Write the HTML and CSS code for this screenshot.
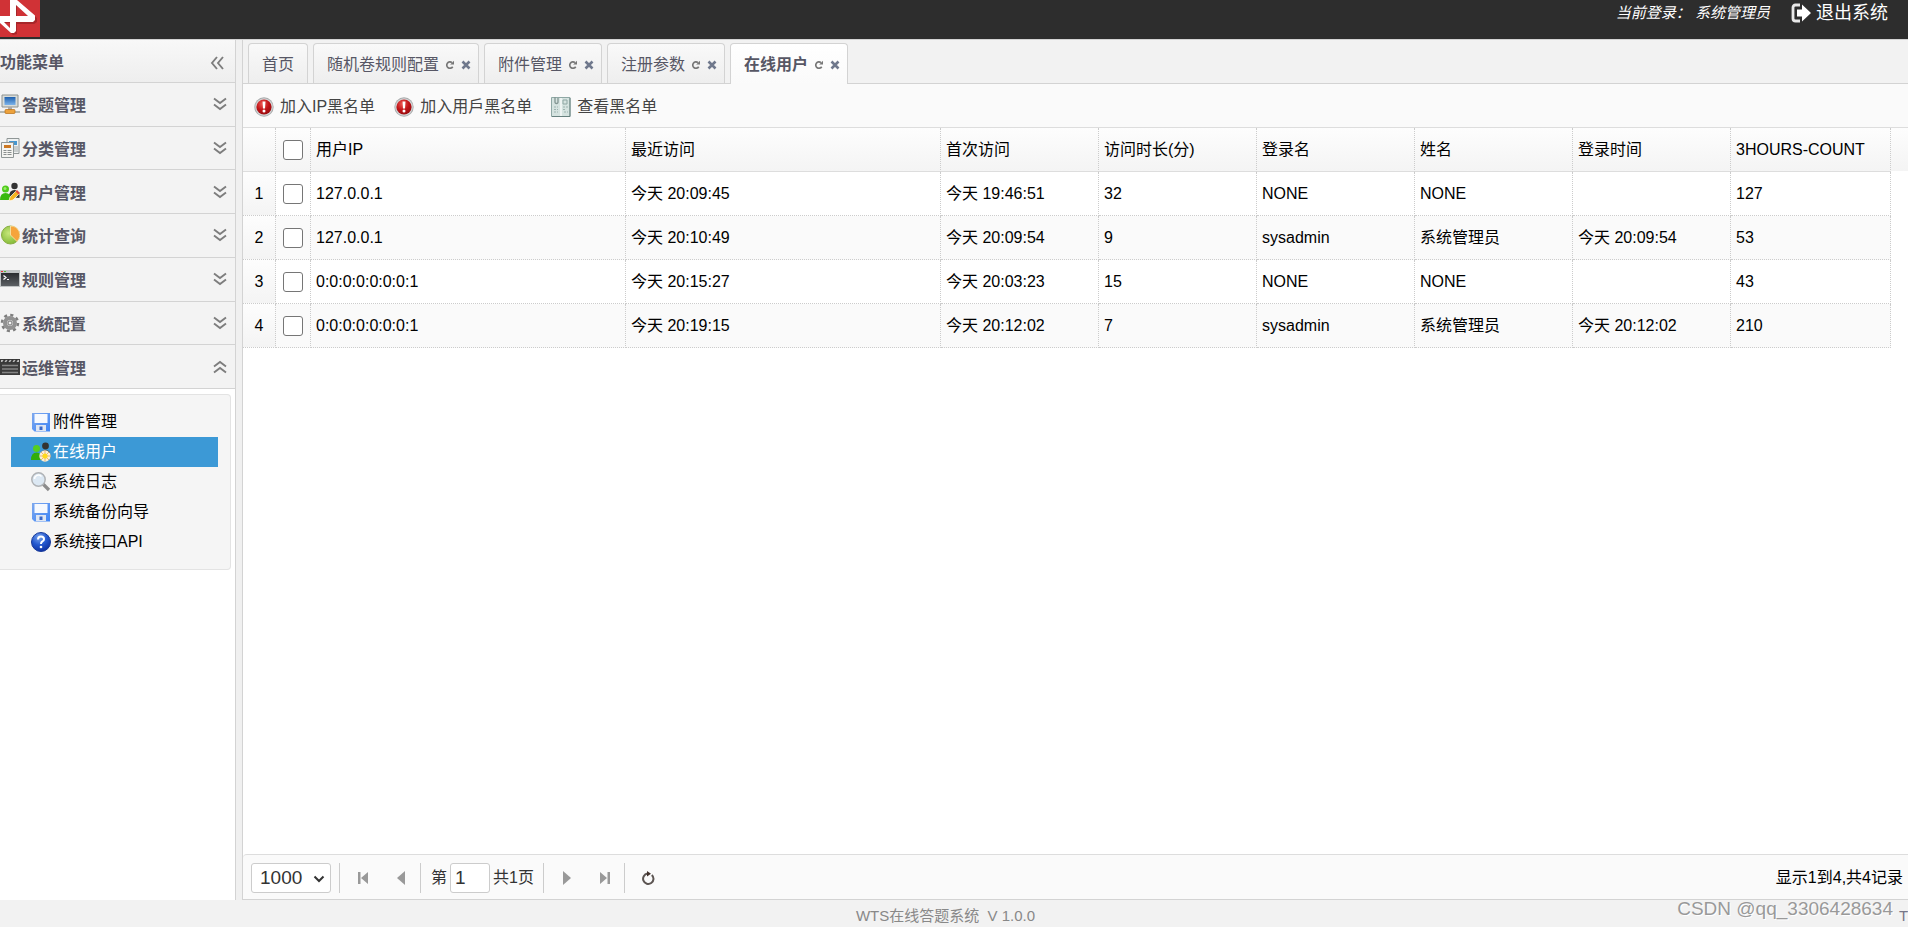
FILE: index.html
```html
<!DOCTYPE html>
<html lang="zh-CN">
<head>
<meta charset="utf-8">
<title>WTS在线答题系统</title>
<link rel="stylesheet" href="styles.css">
</head>
<body>
<svg class="sprite" aria-hidden="true">
  <defs>
    <linearGradient id="gBlue" x1="0" y1="0" x2="0" y2="1"><stop offset="0" stop-color="#1d5fae"/><stop offset="1" stop-color="#7db4ea"/></linearGradient>
    <linearGradient id="gDisk" x1="0" y1="0" x2="1" y2="1"><stop offset="0" stop-color="#7fa9ee"/><stop offset="1" stop-color="#3f86f6"/></linearGradient>
    <radialGradient id="gRed" cx=".4" cy=".3" r=".8"><stop offset="0" stop-color="#ee5a55"/><stop offset=".5" stop-color="#c11418"/><stop offset="1" stop-color="#8d0a0c"/></radialGradient>
    <radialGradient id="gHelp" cx=".4" cy=".25" r=".8"><stop offset="0" stop-color="#7aa5ee"/><stop offset=".5" stop-color="#2459cf"/><stop offset="1" stop-color="#0c2d9c"/></radialGradient>
    <radialGradient id="gPie" cx=".4" cy=".4" r=".7"><stop offset="0" stop-color="#c6e67c"/><stop offset="1" stop-color="#7cb52e"/></radialGradient>
    <linearGradient id="gDark" x1="0" y1="0" x2="0" y2="1"><stop offset="0" stop-color="#2a2d30"/><stop offset="1" stop-color="#5c6064"/></linearGradient>
  </defs>
  <symbol id="down" viewBox="0 0 14 14"><path d="M1 1.500 7 6l6-4.500M1 7.500 7 12l6-4.500" fill="none" stroke="#7d7d7d" stroke-width="1.900"/></symbol>
  <symbol id="disk" viewBox="0 0 20 20"><path d="M1 1h18v18.500H3.500L1 17z" fill="url(#gDisk)"/><path d="M3.500 2h13v9h-13z" fill="#f6f9fe"/><path d="M5 13h10v6H5z" fill="#dfe6f2"/><path d="M8.500 14.500h3v3.500h-3z" fill="#3868c8"/></symbol>
  <symbol id="alert" viewBox="0 0 20 20"><circle cx="10" cy="10" r="9.700" fill="#a9abad"/><circle cx="10" cy="10" r="8.800" fill="#d3d5d6"/><circle cx="10" cy="10" r="7.600" fill="url(#gRed)"/><path d="M8.500 4.500h3l-.5 7H9z" fill="#fff"/><circle cx="10" cy="14" r="1.500" fill="#fff"/></symbol>
  <symbol id="reload" viewBox="0 0 10 10"><path d="M7.700 6.700A3.200 3.200 0 1 1 7 2.600" fill="none" stroke="#777" stroke-width="1.700"/><path d="M5.200 4.500H9V.8z" fill="#777"/></symbol>
  <symbol id="close" viewBox="0 0 10 10"><path d="M1.500 1.500l7 7M8.500 1.500l-7 7" stroke="#6f788c" stroke-width="2.600"/></symbol>
</svg>

<header class="topbar">
  <svg class="logo" viewBox="0 0 40 37" role="img" aria-label="WTS"><path d="M0 0h40v37H0z" fill="#d03236"/><path d="M0 17h10V0h6l20 17v4l-3 2H16v10l-4 1L0 22zM16 5v11h12zM4 22l7 6v-6z" fill="#7e1a1d" fill-rule="evenodd" opacity=".5" transform="translate(1 1)"/><path d="M0 16h10V0h7l18 15.500V20l-2 2H16v9l-2 2h-3L0 23zM16 5v11h12zM4 22l6 6v-6z" fill="#fff" fill-rule="evenodd"/></svg>
  <div class="account">
    <span class="who">当前登录： 系统管理员</span>
    <a class="logout" href="#"><svg class="icon" viewBox="0 0 20 20"><path d="M9 2H4.500Q2 2 2 4.500v11Q2 18 4.500 18H9" fill="none" stroke="#e8e8e8" stroke-width="2.800"/><path d="M6 6.500h5V1.500l9 8.500-9 8.500v-5H6z" fill="#fff"/></svg>退出系统</a>
  </div>
</header>

<div class="workspace">
  <aside class="sidebar">
    <div class="side-title"><span>功能菜单</span><button class="plain" aria-label="收起"><svg class="chev" viewBox="0 0 14 14"><path d="M7 1 2 7l5 6M13 1 8 7l5 6" fill="none" stroke="#7d7d7d" stroke-width="1.900"/></svg></button></div>
    <nav class="accordion">
      <button class="fold"><svg class="icon" viewBox="0 0 20 20"><path d="M2 1h16v12H2z" fill="#d9dcd8" stroke="#8d9290"/><path d="M4.500 3h11v8h-11z" fill="url(#gBlue)"/><path d="M8 13h4v3H8z" fill="#aaa"/><path d="M0 17h20v2H0z" fill="#b5b9b5"/><rect x="5" y="15.500" width="10" height="4" rx="1" fill="#eda23c" stroke="#b66f16" stroke-width=".7"/></svg><span>答题管理</span><svg class="chev"><use href="#down"/></svg></button>
      <button class="fold"><svg class="icon" viewBox="0 0 20 20"><path d="M7 .5h12v15H7z" fill="#eef1f1" stroke="#8f9696"/><path d="M9 3h8v4H9z" fill="#4797cf"/><path d="M14 9h4M14 11h4M14 13h4" stroke="#a4abab"/><path d="M1.500 4.500h12v15h-12z" fill="#f4f4f1" stroke="#8f9696"/><path d="M4 7h7v3H4z" fill="#cc7823"/><path d="M3.500 12.500h3m1 0h4m-8 2h3m1 0h4m-8 2h3m1 0h4" stroke="#8a8f8f"/></svg><span>分类管理</span><svg class="chev"><use href="#down"/></svg></button>
      <button class="fold"><svg class="icon" viewBox="0 0 20 20"><circle cx="14.500" cy="4" r="3.200" fill="#333"/><path d="M9 15q0-7 5.500-7t5 8z" fill="#333"/><circle cx="5.500" cy="7" r="3.500" fill="#4ecb19"/><path d="M0 18q0-7 5.500-7t5.500 7z" fill="#39b90c"/><circle cx="5" cy="6.500" r="1.500" fill="#9aea6b"/><path d="M9 19l1-4 7-7 3 3-7 7z" fill="#f7b521" stroke="#fff" stroke-width=".7"/><path d="M15.500 9.500l3 3L20 11l-3-3z" fill="#e34a3c"/></svg><span>用户管理</span><svg class="chev"><use href="#down"/></svg></button>
      <button class="fold"><svg class="icon" viewBox="0 0 20 20"><circle cx="10.500" cy="10" r="9" fill="url(#gPie)" stroke="#87ad43"/><path d="M10.500 10V1a9 9 0 0 1 6.500 15.500z" fill="#f6a43b" stroke="#fbe7b2" stroke-width=".8"/></svg><span>统计查询</span><svg class="chev"><use href="#down"/></svg></button>
      <button class="fold"><svg class="icon" viewBox="0 0 20 20"><path d="M0 1h20v17H0z" fill="#bfc3c4"/><path d="M1 4h18v13H1z" fill="url(#gDark)"/><path d="M1 2h2v1H1z" fill="#e33"/><path d="M4 2h2v1H4z" fill="#5b3"/><path d="M3.500 6.500 6 8.500 3.500 10.500M7 10.500h2" fill="none" stroke="#fff" stroke-width="1.200"/></svg><span>规则管理</span><svg class="chev"><use href="#down"/></svg></button>
      <button class="fold"><svg class="icon" viewBox="0 0 20 20"><circle cx="10" cy="10" r="8" fill="none" stroke="#7f7f7f" stroke-width="2.500" stroke-dasharray="3.100 3.183"/><circle cx="10" cy="10" r="5" fill="#d5d5d5" stroke="#929292" stroke-width="4"/><circle cx="10" cy="10" r="2" fill="#f5f5f5" stroke="#777"/></svg><span>系统配置</span><svg class="chev"><use href="#down"/></svg></button>
      <button class="fold" aria-expanded="true"><svg class="icon" viewBox="0 0 20 20"><path d="M0 2h20v16H0z" fill="#3b3b3b"/><path d="M1 3h18v2H1z" fill="#bbb"/><path d="M3 5.500l2-3M7 5.500l2-3M11 5.500l2-3M15 5.500l2-3" stroke="#333" stroke-width="1.800"/><path d="M2 8.500h16M2 12h16M2 15.500h16" stroke="#858585" stroke-width="1.600"/></svg><span>运维管理</span><svg class="chev flip"><use href="#down"/></svg></button>
    </nav>
    <div class="submenu">
      <a class="entry" href="#"><svg class="icon"><use href="#disk"/></svg>附件管理</a>
      <a class="entry current" href="#"><svg class="icon" viewBox="0 0 20 20"><circle cx="14.500" cy="4" r="3.400" fill="#333"/><path d="M9 15q0-7 5.500-7t5 8z" fill="#333"/><circle cx="5.500" cy="6.500" r="3.500" fill="#55cf20"/><path d="M0 18q0-7.500 5.500-7.500T11 18z" fill="#31ad08"/><circle cx="14" cy="14" r="5.700" fill="#f9efd8"/><path d="M14 8.500v11M8.500 14h11M10 10l8 8M18 10l-8 8" stroke="#e2a45d" stroke-width=".8"/><circle cx="14" cy="14" r="2.600" fill="#ffd91c"/></svg>在线用户</a>
      <a class="entry" href="#"><svg class="icon" viewBox="0 0 20 20"><path d="M12 12l6 6" stroke="#8c8c8c" stroke-width="3.200"/><circle cx="7.500" cy="7.500" r="6.700" fill="#dce8f3" stroke="#b0b3b6" stroke-width="1.500"/><path d="M3.500 7a4 4 0 0 1 7-2.500" fill="none" stroke="#fff" stroke-width="1.500"/></svg>系统日志</a>
      <a class="entry" href="#"><svg class="icon"><use href="#disk"/></svg>系统备份向导</a>
      <a class="entry" href="#"><svg class="icon" viewBox="0 0 20 20"><circle cx="10" cy="10" r="9.500" fill="url(#gHelp)" stroke="#183b9b"/><path d="M7 7.500Q7 4.500 10 4.500t3 2.700q0 1.300-1.700 2.300Q10 10.200 10 12" fill="none" stroke="#fff" stroke-width="2"/><circle cx="10" cy="15" r="1.300" fill="#fff"/></svg>系统接口API</a>
    </div>
  </aside>

  <main class="main">
    <div class="tabs">
      <a class="tab" href="#">首页</a>
      <div class="tab closable"><a href="#">随机卷规则配置</a><button class="plain" aria-label="刷新"><svg class="mini"><use href="#reload"/></svg></button><button class="plain" aria-label="关闭"><svg class="mini"><use href="#close"/></svg></button></div>
      <div class="tab closable"><a href="#">附件管理</a><button class="plain" aria-label="刷新"><svg class="mini"><use href="#reload"/></svg></button><button class="plain" aria-label="关闭"><svg class="mini"><use href="#close"/></svg></button></div>
      <div class="tab closable"><a href="#">注册参数</a><button class="plain" aria-label="刷新"><svg class="mini"><use href="#reload"/></svg></button><button class="plain" aria-label="关闭"><svg class="mini"><use href="#close"/></svg></button></div>
      <div class="tab closable active"><a href="#">在线用户</a><button class="plain" aria-label="刷新"><svg class="mini"><use href="#reload"/></svg></button><button class="plain" aria-label="关闭"><svg class="mini"><use href="#close"/></svg></button></div>
    </div>

    <div class="toolbar">
      <button class="tool"><svg class="icon"><use href="#alert"/></svg>加入IP黑名单</button>
      <button class="tool"><svg class="icon"><use href="#alert"/></svg>加入用戶黑名单</button>
      <button class="tool"><svg class="icon" viewBox="0 0 20 20"><path d="M.5.500h18.500v19H.5z" fill="#d5e3e0" stroke="#8fa8a5"/><path d="M19 1v18.500H1" fill="none" stroke="#67817f"/><path d="M10 1v18" stroke="#f6fafa" stroke-width="1.500"/><path d="M4 0v5q0 1.500 1.500 1.500T7 5V1" fill="none" stroke="#829592" stroke-width="1.300"/><path d="M12 3h4v4h-4z" fill="none" stroke="#8fa7a4"/><path d="M3 10h4M3 12.500h4M3 15h4M12 10h5M12 12.500h3M13 15h4" stroke="#9db3b0" stroke-dasharray="2 1"/></svg>查看黑名单</button>
    </div>

    <div class="grid-area">
      <table class="grid">
        <colgroup><col class="c-num"><col class="c-check"><col class="c-wide"><col class="c-wide"><col class="c-mid"><col class="c-mid"><col class="c-mid"><col class="c-mid"><col class="c-mid"><col class="c-last"></colgroup>
        <thead>
          <tr><th></th><th class="center"><input type="checkbox" aria-label="全选"></th><th>用户IP</th><th>最近访问</th><th>首次访问</th><th>访问时长(分)</th><th>登录名</th><th>姓名</th><th>登录时间</th><th>3HOURS-COUNT</th></tr>
        </thead>
        <tbody>
          <tr><td class="num">1</td><td class="center"><input type="checkbox" aria-label="选择第1行"></td><td>127.0.0.1</td><td>今天 20:09:45</td><td>今天 19:46:51</td><td>32</td><td>NONE</td><td>NONE</td><td></td><td>127</td></tr>
          <tr><td class="num">2</td><td class="center"><input type="checkbox" aria-label="选择第2行"></td><td>127.0.0.1</td><td>今天 20:10:49</td><td>今天 20:09:54</td><td>9</td><td>sysadmin</td><td>系统管理员</td><td>今天 20:09:54</td><td>53</td></tr>
          <tr><td class="num">3</td><td class="center"><input type="checkbox" aria-label="选择第3行"></td><td>0:0:0:0:0:0:0:1</td><td>今天 20:15:27</td><td>今天 20:03:23</td><td>15</td><td>NONE</td><td>NONE</td><td></td><td>43</td></tr>
          <tr><td class="num">4</td><td class="center"><input type="checkbox" aria-label="选择第4行"></td><td>0:0:0:0:0:0:0:1</td><td>今天 20:19:15</td><td>今天 20:12:02</td><td>7</td><td>sysadmin</td><td>系统管理员</td><td>今天 20:12:02</td><td>210</td></tr>
        </tbody>
      </table>
    </div>

    <div class="pager">
      <div class="size"><select aria-label="每页条数"><option>1000</option></select><svg class="caret" viewBox="0 0 12 8"><path d="M1.500 1.500 6 6l4.500-4.500" fill="none" stroke="#333" stroke-width="2"/></svg></div>
      <div class="group">
        <button class="plain step" aria-label="首页"><svg viewBox="0 0 14 14"><path d="M2 1h2.500v12H2zM12 1v12L5 7z" fill="#999"/></svg></button>
        <button class="plain step" aria-label="上一页"><svg viewBox="0 0 14 14"><path d="M11 0v14L3 7z" fill="#999"/></svg></button>
      </div>
      <div class="group jump">
        <label for="page">第</label><input id="page" type="text" value="1"><span>共1页</span>
      </div>
      <div class="group">
        <button class="plain step" aria-label="下一页"><svg viewBox="0 0 14 14"><path d="M3 0v14l8-7z" fill="#999"/></svg></button>
        <button class="plain step" aria-label="末页"><svg viewBox="0 0 14 14"><path d="M2 1v12l7-6zM9.500 1H12v12H9.500z" fill="#999"/></svg></button>
      </div>
      <div class="group">
        <button class="plain step" aria-label="刷新"><svg viewBox="0 0 14 14"><path d="M10.800 3.900A5.200 5.200 0 1 1 6.500 2.600" fill="none" stroke="#5c5552" stroke-width="2"/><path d="M6 0v5.500l4-2.700z" fill="#40302b"/></svg></button>
      </div>
      <span class="summary">显示1到4,共4记录</span>
    </div>
  </main>
</div>

<footer class="footer"><span class="product">WTS在线答题系统&nbsp; V 1.0.0</span><span class="edge">T</span><span class="watermark">CSDN @qq_3306428634</span></footer>
</body>
</html>
```

FILE: styles.css
```css
* { box-sizing: border-box; }

body {
  margin: 0;
  height: 100vh;
  display: flex;
  flex-direction: column;
  overflow: hidden;
  background: #f2f2f2;
  color: #000;
  font: 16px/20px "Liberation Sans", "Noto Sans CJK SC", sans-serif;
}

a { color: inherit; text-decoration: none; }
button, input, select { font: inherit; color: inherit; margin: 0; }
button { background: none; border: 0; padding: 0; }
svg { display: block; flex: none; }

.sprite { position: absolute; width: 0; height: 0; }
.icon { width: 20px; height: 20px; }
.chev { width: 14px; height: 14px; }
.flip { transform: rotate(180deg); }
.mini { width: 10px; height: 10px; }

.topbar {
  flex: none;
  display: flex;
  justify-content: space-between;
  height: 40px;
  background: #2d2d2d;
  border-bottom: 1px solid #d3d3d3;
  color: #fff;
}
.logo { width: 40px; height: 37px; }
.account { display: flex; align-items: center; gap: 21px; height: 25px; padding-right: 20px; }
.who { font-size: 15px; font-style: italic; }
.logout { display: flex; align-items: center; gap: 5px; font-size: 18px; }

.workspace { flex: 1; min-height: 0; display: flex; gap: 6px; background: #f0f0f0; }

.sidebar { flex: none; width: 236px; background: #fff; border-right: 1px solid #d3d3d3; }
.side-title {
  display: flex;
  align-items: center;
  justify-content: space-between;
  height: 43px;
  padding: 4px 11px 0 0;
  border-bottom: 1px solid #d3d3d3;
  background: linear-gradient(#f8f8f8, #eee);
  color: #575765;
  font-weight: bold;
}
.accordion { display: grid; grid-template-rows: repeat(7, 1fr); height: 306px; color: #575765; }
.fold {
  display: flex;
  align-items: center;
  gap: 2px;
  padding-right: 8px;
  border-bottom: 1px solid #d3d3d3;
  background: #f3f3f3;
  font-weight: bold;
  text-align: left;
}
.fold span { flex: 1; padding-top: 4px; }
.submenu {
  margin: 5px 4px 0 0;
  padding: 12px 12px 12px 11px;
  border: 1px solid #e3e3e3;
  border-left: 0;
  border-radius: 0 4px 4px 0;
  background: #f5f5f5;
}
.entry { display: flex; align-items: center; gap: 2px; height: 30px; padding-left: 20px; }
.current { background: #3c99d6; color: #fff; }

.main {
  flex: 1;
  min-width: 0;
  display: flex;
  flex-direction: column;
  border-left: 1px solid #d3d3d3;
  border-bottom: 1px solid #d3d3d3;
  background: #fff;
}
.tabs {
  display: flex;
  align-items: flex-end;
  gap: 5px;
  height: 44px;
  padding-left: 5px;
  border-bottom: 1px solid #d3d3d3;
  background: #f2f2f2;
  color: #575765;
}
.tab {
  display: flex;
  align-items: center;
  height: 40px;
  padding: 2px 13px 0;
  border: 1px solid #d3d3d3;
  border-bottom: 0;
  border-radius: 4px 4px 0 0;
  background: linear-gradient(#f9f9f9, #eee);
}
.closable { gap: 6px; padding-right: 7px; }
.active { height: 41px; margin-bottom: -1px; background: linear-gradient(#fff, #fafafa); font-weight: bold; }

.toolbar {
  display: flex;
  align-items: center;
  gap: 19px;
  height: 44px;
  padding: 3px 0 0 11px;
  border-bottom: 1px solid #ddd;
  background: #fafafa;
  color: #444;
}
.tool { display: flex; align-items: center; gap: 6px; }

.grid-area { flex: 1; min-height: 0; background: linear-gradient(#fdfdfd, #f4f4f4) top / 100% 43px no-repeat; }
.grid { width: calc(100% - 17px); table-layout: fixed; border-collapse: separate; border-spacing: 0; }
.c-num { width: 33px; }
.c-check { width: 35px; }
.c-wide { width: 315px; }
.c-mid { width: 158px; }
.c-last { width: 160px; }
.grid th, .grid td {
  height: 44px;
  padding: 0 5px;
  border-right: 1px dotted #ccc;
  border-bottom: 1px dotted #ccc;
  font-weight: normal;
  text-align: left;
  white-space: nowrap;
}
.grid th { border-bottom: 1px solid #ddd; }
.grid tbody tr:nth-child(even) { background: #fafafa; }
.grid .num { padding: 0; text-align: center; background: linear-gradient(#fdfdfd, #f4f4f4); }
.grid .center { padding: 0; text-align: center; }
.grid input {
  appearance: none;
  display: block;
  width: 20px;
  height: 20px;
  margin: 0 auto;
  border: 1px solid #767676;
  border-radius: 3px;
  background: #fff;
}

.pager {
  display: flex;
  align-items: center;
  height: 45px;
  padding: 1px 5px 0 8px;
  border-top: 1px solid #ddd;
  border-radius: 4px 0 0 0;
  background: #fafafa;
  color: #333;
}
.size { position: relative; margin-right: 8px; }
.size select {
  appearance: none;
  width: 80px;
  height: 30px;
  padding: 0 8px;
  border: 1px solid #ccc;
  border-radius: 3px;
  background: #fff;
  font-size: 19px;
}
.caret { position: absolute; right: 6px; top: 12px; width: 12px; height: 8px; pointer-events: none; }
.group { display: flex; align-items: center; gap: 24px; height: 30px; padding: 0 12px 0 16px; border-left: 1px solid #ccc; }
.step svg { width: 14px; height: 14px; }
.jump { gap: 3px; padding: 0 9px 0 10px; }
.jump input {
  width: 40px;
  height: 30px;
  padding: 0 4px;
  border: 1px solid #ccc;
  border-radius: 3px;
  background: #fff;
  font-size: 19px;
}
.summary { margin-left: auto; color: #000; }

.footer { flex: none; position: relative; display: flex; align-items: center; height: 27px; padding-top: 5px; font-size: 15px; color: #888; }
.product { flex: 1; text-align: center; }
.edge { width: 17px; padding-left: 8px; color: #778; overflow: hidden; }
.watermark { position: absolute; right: 15px; top: -1px; color: #999; font-size: 19px; text-shadow: 1px 1px 0 #fff; }
```
